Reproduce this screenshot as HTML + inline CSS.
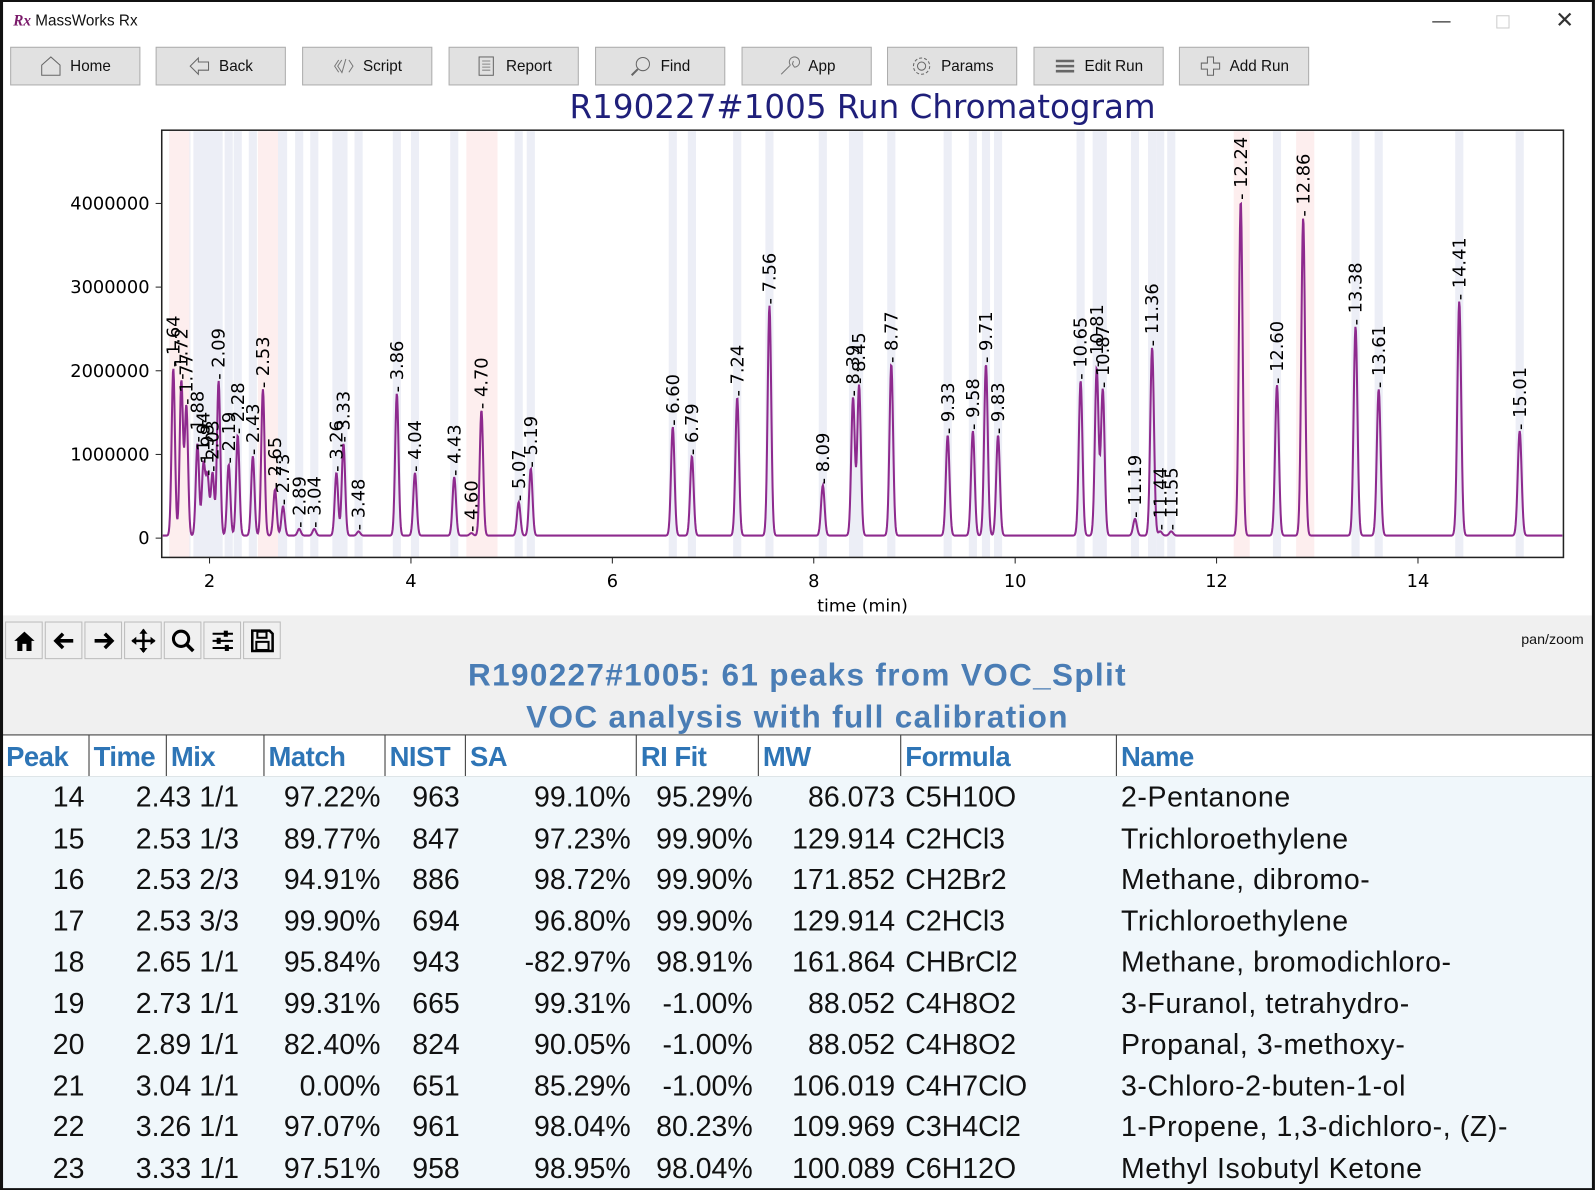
<!DOCTYPE html>
<html><head><meta charset="utf-8"><style>
html,body{margin:0;padding:0;background:#fff;overflow:hidden}
#wrap{width:1568px;height:1170px;transform:scale(1.0172);transform-origin:0 0;position:relative;font-family:"Liberation Sans",sans-serif}
.win{position:absolute;left:0;top:0;width:1568px;height:1170px;background:#fff;overflow:hidden}
.frame{position:absolute;left:0;top:0;width:1562px;height:1166px;border:3px solid #111;border-top:2px solid #111;pointer-events:none}
.tb{position:absolute;top:46px;height:36px;width:126px;background:#e1e1e1;border:1px solid #adadad;font-size:15px;color:#111;display:flex;align-items:center;justify-content:center;gap:8px}
.tb svg{width:22px;height:22px}
.mid{position:absolute;left:0;top:605px;width:1565px;height:117px;background:#f0f0f0}
.nb{position:absolute;top:6px;width:37px;height:37px;background:#f0f0f0;border:1px solid #bbb;box-sizing:border-box;display:flex;align-items:center;justify-content:center}
.h2{position:absolute;left:0;width:1568px;text-align:center;color:#4a7db5;font-weight:bold;font-size:31px;letter-spacing:1.3px}
.hd{position:absolute;left:0;top:722px;width:1565px;height:40px;border-top:1px solid #333;border-bottom:1px solid #333;background:#fff}
.hd div{position:absolute;top:0;height:40px;line-height:42px;color:#2e75b6;font-weight:bold;font-size:27px;border-left:1px solid #333;padding-left:4px;letter-spacing:-0.5px}
.rows{position:absolute;left:0;top:763px;width:1565px;height:410px;background:#f0f7fb}
.r{position:absolute;left:0;height:40.5px;width:1565px;font-size:28px;color:#111;line-height:40px}
.r span{position:absolute;white-space:nowrap}
</style></head><body><div id="wrap"><div class="win">
<div style="position:absolute;left:13px;top:12px;font-size:15px;color:#111"><span style="color:#7a1a6a;font-family:'Liberation Serif';font-weight:bold;font-style:italic">Rx</span> MassWorks Rx</div>
<div style="position:absolute;left:1408px;top:10px;font-size:18px;color:#333">&#8212;</div>
<div style="position:absolute;left:1471px;top:15px;width:11px;height:11px;border:1px solid #ccc"></div>
<div style="position:absolute;left:1529px;top:7px;font-size:22px;color:#333">&#10005;</div>

<div class="tb" style="left:10px"><svg viewBox="0 0 22 22"><path d="M2 10 L11 2 L20 10 V20 H2 Z" fill="none" stroke="#666"/></svg>Home</div>
<div class="tb" style="left:153px"><svg viewBox="0 0 22 22"><path d="M2 11 L10 3 V7 H20 V15 H10 V19 Z" fill="none" stroke="#666"/></svg>Back</div>
<div class="tb" style="left:297px"><svg viewBox="0 0 22 22"><path d="M6 5 L2 11 L6 17 M9 5 L5 11 L9 17 M13 4 L9 18 M16 5 L20 11 L16 17" fill="none" stroke="#777"/></svg>Script</div>
<div class="tb" style="left:441px"><svg viewBox="0 0 22 22"><rect x="4" y="2" width="14" height="18" fill="none" stroke="#666"/><path d="M7 6H15M7 9H15M7 12H15M7 15H15" stroke="#888"/></svg>Report</div>
<div class="tb" style="left:585px"><svg viewBox="0 0 22 22"><circle cx="13" cy="9" r="6.5" fill="none" stroke="#666"/><path d="M8 14 L2 20" stroke="#666" stroke-width="2"/></svg>Find</div>
<div class="tb" style="left:729px"><svg viewBox="0 0 22 22"><path d="M3 19 L12 10 M12 10 A5 5 0 1 1 16 12 L14 9 L15 6" fill="none" stroke="#777"/></svg>App</div>
<div class="tb" style="left:872px"><svg viewBox="0 0 22 22"><circle cx="11" cy="11" r="4" fill="none" stroke="#666"/><circle cx="11" cy="11" r="8" fill="none" stroke="#666" stroke-dasharray="3 2"/></svg>Params</div>
<div class="tb" style="left:1016px"><svg viewBox="0 0 22 22"><path d="M2 6H20M2 11H20M2 16H20" stroke="#666" stroke-width="2.5"/></svg>Edit Run</div>
<div class="tb" style="left:1159px"><svg viewBox="0 0 22 22"><path d="M8 2H14V8H20V14H14V20H8V14H2V8H8Z" fill="none" stroke="#666"/></svg>Add Run</div>

<div style="position:absolute;left:0;width:1696px;top:86px;text-align:center;font-size:32px;color:#1f1f7a;font-family:'DejaVu Sans',sans-serif">R190227#1005 Run Chromatogram</div>
<svg id="ch" style="position:absolute;left:0;top:0" width="1565" height="605" font-family="DejaVu Sans,sans-serif"></svg>

<div class="mid">
<div class="nb" style="left:5px"><svg width="26" height="26" viewBox="0 0 26 26"><path d="M3 13 L13 4 L23 13 H20 V23 H15 V16 H11 V23 H6 V13Z"/></svg></div>
<div class="nb" style="left:44px"><svg width="26" height="26" viewBox="0 0 26 26"><path d="M22 13H6M12 6L5 13L12 20" fill="none" stroke="#000" stroke-width="3.5"/></svg></div>
<div class="nb" style="left:83px"><svg width="26" height="26" viewBox="0 0 26 26"><path d="M4 13H20M14 6L21 13L14 20" fill="none" stroke="#000" stroke-width="3.5"/></svg></div>
<div class="nb" style="left:122px"><svg width="26" height="26" viewBox="0 0 26 26"><path d="M13 2V24M2 13H24" stroke="#000" stroke-width="2.5"/><path d="M13 1L9 6H17ZM13 25L9 20H17ZM1 13L6 9V17ZM25 13L20 9V17Z"/></svg></div>
<div class="nb" style="left:161px"><svg width="26" height="26" viewBox="0 0 26 26"><circle cx="11" cy="11" r="7.5" fill="none" stroke="#000" stroke-width="3"/><path d="M16 16L23 23" stroke="#000" stroke-width="3.5"/></svg></div>
<div class="nb" style="left:200px"><svg width="26" height="26" viewBox="0 0 26 26"><path d="M3 6H23M3 13H23M3 20H23" stroke="#000" stroke-width="2"/><rect x="14" y="3" width="4" height="6"/><rect x="7" y="10" width="4" height="6"/><rect x="15" y="17" width="4" height="6"/></svg></div>
<div class="nb" style="left:239px"><svg width="26" height="26" viewBox="0 0 26 26"><path d="M3 3H20L23 6V23H3Z" fill="none" stroke="#000" stroke-width="2.5"/><rect x="8" y="4" width="9" height="6" fill="none" stroke="#000" stroke-width="2"/><rect x="7" y="14" width="12" height="8" fill="none" stroke="#000" stroke-width="2"/></svg></div>
<div style="position:absolute;right:8px;top:15px;font-size:14px;color:#111">pan/zoom</div>
<div class="h2" style="top:41px">R190227#1005: 61 peaks from VOC_Split</div>
<div class="h2" style="top:82px">VOC analysis with full calibration</div>
</div>

<div class="hd">
<div style="left:2px;border-left:none">Peak</div><div style="left:87px">Time</div><div style="left:163px">Mix</div><div style="left:259px">Match</div><div style="left:378px">NIST</div><div style="left:457px">SA</div><div style="left:625px">RI Fit</div><div style="left:745px">MW</div><div style="left:885px">Formula</div><div style="left:1097px">Name</div>
</div>
<div class="rows" id="rows"></div>
<div class="frame"></div>
</div></div>
<script>
var data=[["14","2.43","1/1","97.22%","963","99.10%","95.29%","86.073","C5H10O","2-Pentanone"],
["15","2.53","1/3","89.77%","847","97.23%","99.90%","129.914","C2HCl3","Trichloroethylene"],
["16","2.53","2/3","94.91%","886","98.72%","99.90%","171.852","CH2Br2","Methane, dibromo-"],
["17","2.53","3/3","99.90%","694","96.80%","99.90%","129.914","C2HCl3","Trichloroethylene"],
["18","2.65","1/1","95.84%","943","-82.97%","98.91%","161.864","CHBrCl2","Methane, bromodichloro-"],
["19","2.73","1/1","99.31%","665","99.31%","-1.00%","88.052","C4H8O2","3-Furanol, tetrahydro-"],
["20","2.89","1/1","82.40%","824","90.05%","-1.00%","88.052","C4H8O2","Propanal, 3-methoxy-"],
["21","3.04","1/1","0.00%","651","85.29%","-1.00%","106.019","C4H7ClO","3-Chloro-2-buten-1-ol"],
["22","3.26","1/1","97.07%","961","98.04%","80.23%","109.969","C3H4Cl2","1-Propene, 1,3-dichloro-, (Z)-"],
["23","3.33","1/1","97.51%","958","98.95%","98.04%","100.089","C6H12O","Methyl Isobutyl Ketone"]];
var R=[83,188,null,374,452,620,740,880,null,null],L=[null,null,196,null,null,null,null,null,890,1102];
var h='';data.forEach(function(d,i){h+='<div class="r" style="top:'+(i*40.5+1)+'px">';d.forEach(function(v,j){h+='<span style="'+(R[j]?'right:'+(1565-R[j]):'left:'+L[j])+'px'+(j==9?';letter-spacing:0.6px':'')+'">'+v+'</span>'});h+='</div>'});
document.getElementById('rows').innerHTML=h;
var pk=[[1.64,2.0],[1.72,1.85],[1.77,1.55],[1.88,1.1],[1.94,0.85],[1.98,0.7],[2.03,0.75],[2.09,1.85],[2.19,0.85],[2.28,1.2],[2.43,0.95],[2.53,1.75],[2.65,0.55],[2.73,0.35],[2.89,0.08],[3.04,0.08],[3.26,0.75],[3.33,1.1],[3.48,0.05],[3.86,1.7],[4.04,0.75],[4.43,0.7],[4.60,0.03],[4.70,1.5],[5.07,0.4],[5.19,0.8],[6.60,1.3],[6.79,0.95],[7.24,1.65],[7.56,2.75],[8.09,0.6],[8.39,1.65],[8.45,1.8],[8.77,2.05],[9.33,1.2],[9.58,1.25],[9.71,2.05],[9.83,1.2],[10.65,1.85],[10.81,2.0],[10.87,1.75],[11.19,0.2],[11.36,2.25],[11.44,0.05],[11.55,0.05],[12.24,4.0],[12.60,1.8],[12.86,3.8],[13.38,2.5],[13.61,1.75],[14.41,2.8],[15.01,1.25]];
var pink=[[1.6,1.8],[2.48,2.68],[4.55,4.86],[12.17,12.33],[12.79,12.97]];
function X(t){return 206+(t-2)*99}function Y(v){return 529-v*82.25}
var s='';
pk.forEach(function(p){s+='<rect x="'+(X(p[0])-4)+'" y="129" width="8" height="419" fill="#eceef6"/>'});
pink.forEach(function(p){s+='<rect x="'+X(p[0])+'" y="129" width="'+(X(p[1])-X(p[0]))+'" height="419" fill="#fdeeee"/>'});
var d='';for(var px=160;px<=1536;px+=0.5){var t=2+(px-206)/99,v=0.03;pk.forEach(function(p){var sg=0.016+0.003*p[0]/15;v+=p[1]*Math.exp(-Math.pow((t-p[0])/sg,2)/2)});d+=(px==160?'M':'L')+px+' '+Y(v).toFixed(1)}
s+='<path d="'+d+'" fill="none" stroke="#8e2a8e" stroke-width="2"/>';
s+='<rect x="159" y="128" width="1378" height="420" fill="none" stroke="#222" stroke-width="1.5"/>';
[0,1,2,3,4].forEach(function(i){var y=Y(i);s+='<line x1="153" x2="159" y1="'+y+'" y2="'+y+'" stroke="#222"/><text x="147" y="'+(y+6)+'" text-anchor="end" font-size="17.5">'+(i?i*1000000:0)+'</text>'});
[2,4,6,8,10,12,14].forEach(function(t){var x=X(t);s+='<line x1="'+x+'" x2="'+x+'" y1="548" y2="554" stroke="#222"/><text x="'+x+'" y="577" text-anchor="middle" font-size="17.5">'+t+'</text>'});
s+='<text x="848" y="601" text-anchor="middle" font-size="17">time (min)</text>';
pk.forEach(function(p){var x=X(p[0])+6,y=Y(p[1]+0.03)-1;s+='<text transform="translate('+x+','+y+') rotate(-90)" font-size="17.5">- '+p[0].toFixed(2)+'</text>'});
document.getElementById('ch').innerHTML=s;
</script></body></html>
